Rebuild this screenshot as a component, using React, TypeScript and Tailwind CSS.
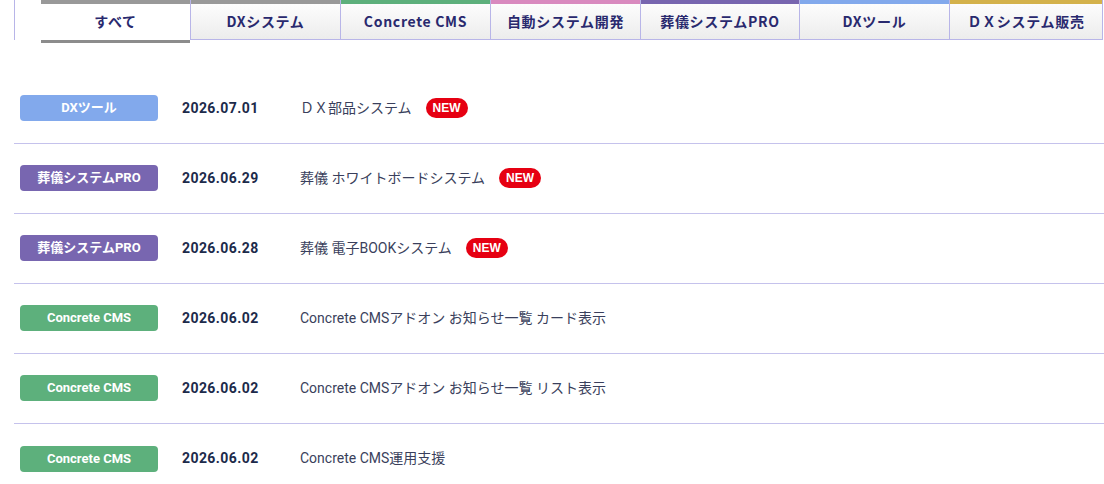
import React from "react";

type Tab = { label: string; bar: string; width: string; active?: boolean };

const tabs: Tab[] = [
  { label: "すべて", bar: "bg-[#999999]", width: "w-[149px]", active: true },
  { label: "DXシステム", bar: "bg-[#999999]", width: "w-[150px]" },
  { label: "Concrete CMS", bar: "bg-[#5db07c]", width: "w-[150px]" },
  { label: "自動システム開発", bar: "bg-[#d98abf]", width: "w-[150px]" },
  { label: "葬儀システムPRO", bar: "bg-[#7866b0]", width: "w-[159px]" },
  { label: "DXツール", bar: "bg-[#82a9ec]", width: "w-[150px]" },
  { label: "ＤＸシステム販売", bar: "bg-[#d4b24c]", width: "w-[154px]" },
];

type Item = { cat: string; color: string; date: string; title: string; isNew?: boolean };

const items: Item[] = [
  { cat: "DXツール", color: "bg-[#82a9ec]", date: "2026.07.01", title: "ＤＸ部品システム", isNew: true },
  { cat: "葬儀システムPRO", color: "bg-[#7866b0]", date: "2026.06.29", title: "葬儀 ホワイトボードシステム", isNew: true },
  { cat: "葬儀システムPRO", color: "bg-[#7866b0]", date: "2026.06.28", title: "葬儀 電子BOOKシステム", isNew: true },
  { cat: "Concrete CMS", color: "bg-[#5db07c]", date: "2026.06.02", title: "Concrete CMSアドオン お知らせ一覧 カード表示" },
  { cat: "Concrete CMS", color: "bg-[#5db07c]", date: "2026.06.02", title: "Concrete CMSアドオン お知らせ一覧 リスト表示" },
  { cat: "Concrete CMS", color: "bg-[#5db07c]", date: "2026.06.02", title: "Concrete CMS運用支援" },
];

export default function App() {
  return (
    <div
      className="w-[1104px] h-[484px] overflow-hidden bg-white"
      style={{ fontFamily: "Roboto, 'Noto Sans CJK JP', sans-serif" }}
    >
      {/* Tabs */}
      <div className="flex h-[43px] items-start">
        <div className="h-[40px] w-[15px] border-r border-[#b8b5e8]" />
        <div className="flex flex-1 pl-[26px]">
          {tabs.map((t, i) => (
            <div
              key={t.label}
              className={
                t.active
                  ? `${t.width} flex h-[43px] shrink-0 flex-col bg-white border-b-[3px] border-[#8c8c8c]`
                  : `${t.width} flex h-[40px] shrink-0 flex-col border-l border-b border-[#b8b5e8] bg-gradient-to-b from-white to-[#ececec] ${
                      i === tabs.length - 1 ? "border-r" : ""
                    }`
              }
            >
              <div className={`h-[4px] shrink-0 ${t.bar}`} />
              <div
                className="flex flex-1 items-center justify-center pb-[1px] text-[14px] font-bold tracking-[0.05em] text-[#29296e]"
                style={{ fontFamily: "'Noto Sans CJK JP', sans-serif" }}
              >
                {t.label}
              </div>
            </div>
          ))}
        </div>
      </div>

      {/* List */}
      <ul className="ml-[14px] mt-[31px]">
        {items.map((it, i) => (
          <li
            key={i}
            className={`flex h-[70px] items-center pb-[1px] pl-[6px] ${
              i < items.length - 1 ? "border-b border-[#c5c2ec]" : ""
            }`}
          >
            <span
              className={`${it.color} flex h-[26px] w-[138px] shrink-0 items-center justify-center rounded-[4px] text-[13px] font-bold text-white`}
            >
              {it.cat}
            </span>
            <span className="ml-[24px] w-[118px] shrink-0 text-[14px] font-bold tracking-[0.03em] text-[#1c2a4a]">
              {it.date}
            </span>
            <span className="text-[14px] text-[#3a3f5c]">{it.title}</span>
            {it.isNew && (
              <span
                className="ml-[14px] flex h-[20px] w-[42px] items-center justify-center rounded-full bg-[#e60012] text-[12px] font-bold text-white"
                style={{ fontFamily: "'Liberation Sans', Arial, sans-serif" }}
              >
                NEW
              </span>
            )}
          </li>
        ))}
      </ul>
    </div>
  );
}
